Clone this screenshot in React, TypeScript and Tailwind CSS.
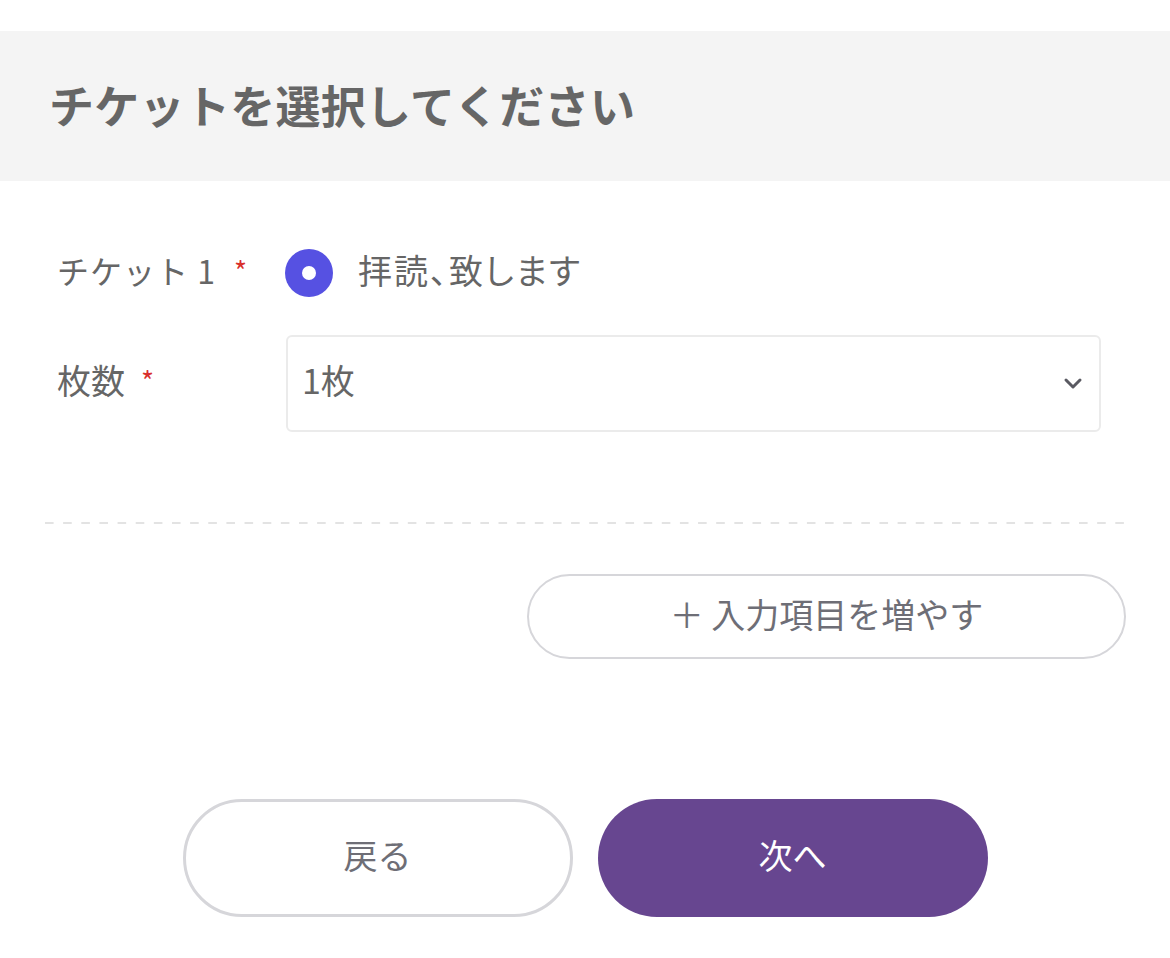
import React from "react";

const font = { fontFamily: '"Noto Sans CJK JP", "Noto Sans", sans-serif' };

export default function App() {
  return (
    <div className="w-full min-h-[958px] bg-white pt-[31px]" style={font}>
      <div className="h-[150px] bg-[#f4f4f4] flex items-center pl-[49px] pb-[4px]">
        <h1 className="text-[45px] font-bold text-[#666666] leading-none tracking-[0.3px]">
          チケットを選択してください
        </h1>
      </div>

      <div className="px-[57px] pt-[68px]">
        <div className="flex items-center h-[48px]">
          <div className="w-[228px] text-[32px] text-[#666666] leading-none flex items-center pb-[6px]">
            <span className="tracking-[1px]">チケット 1</span>
            <span className="text-[#d9302c] ml-[18px] text-[28px]">*</span>
          </div>
          <div className="flex items-center gap-[25px]">
            <span className="w-[48px] h-[48px] rounded-full bg-[#5651e2] flex items-center justify-center">
              <span className="w-[14px] h-[14px] rounded-full bg-white" />
            </span>
            <span className="text-[34px] text-[#666666] leading-none pb-[6px] tracking-[2px] [font-feature-settings:'palt']">拝読、致します</span>
          </div>
        </div>

        <div className="flex items-center mt-[38px]">
          <div className="w-[229px] text-[34px] text-[#666666] leading-none flex items-center pb-[8px]">
            <span>枚数</span>
            <span className="text-[#d9302c] ml-[16px] text-[28px]">*</span>
          </div>
          <div className="w-[815px] h-[97px] border-2 border-[#ebebeb] rounded-[6px] flex items-center justify-between pl-[14px] pr-[16px]">
            <span className="text-[34px] text-[#666666] leading-none pb-[8px]">1枚</span>
            <svg width="20" height="14" viewBox="0 0 20 14">
              <polyline points="3,3 10,10 17,3" fill="none" stroke="#5a5a62" strokeWidth="3" strokeLinecap="round" strokeLinejoin="round" />
            </svg>
          </div>
        </div>
      </div>

      <div className="px-[45px] mt-[90px]">
        <div className="h-[2px] bg-[linear-gradient(to_right,#e3e3e3_50%,transparent_50%)] bg-[length:18.15px_2px]" />
        <div className="flex justify-end mt-[50px]">
          <button className="w-[599px] h-[85px] rounded-full border-2 border-[#d6d6da] bg-white flex items-center justify-center text-[34px] text-[#6e6e76] leading-none mr-[-1px] pb-[6px]">
            ＋ 入力項目を増やす
          </button>
        </div>
      </div>

      <div className="flex justify-center gap-[25px] mt-[140px]">
        <button className="w-[390px] h-[118px] rounded-full border-[3px] border-[#d6d6da] bg-white flex items-center justify-center text-[34px] text-[#6e6e76] leading-none pb-[6px]">
          戻る
        </button>
        <button className="w-[390px] h-[118px] rounded-full bg-[#674690] flex items-center justify-center text-[34px] text-white leading-none pb-[6px]">
          次へ
        </button>
      </div>
    </div>
  );
}
